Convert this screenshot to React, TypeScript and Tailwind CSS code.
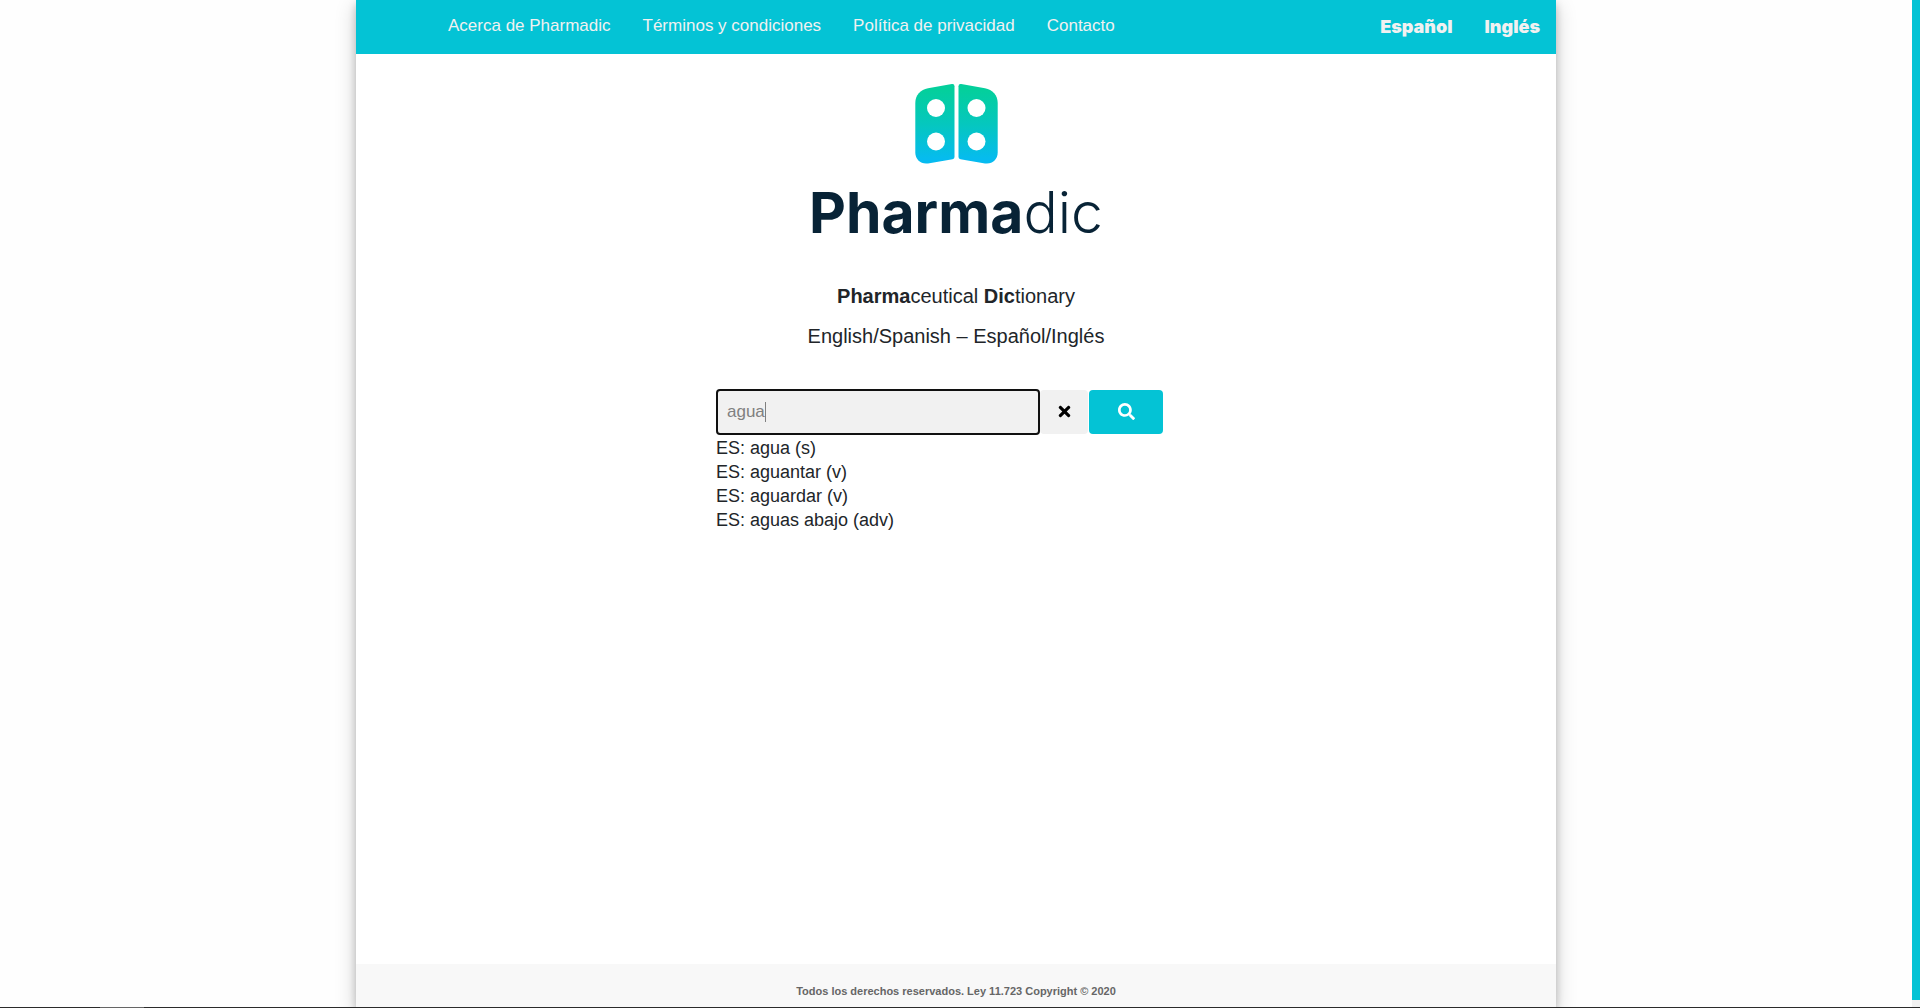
import { FaSearch, FaTimes } from 'react-icons/fa';

const navLinks = ['Acerca de Pharmadic', 'Términos y condiciones', 'Política de privacidad', 'Contacto'];
const languages = ['Español', 'Inglés'];
const suggestions = ['ES: agua (s)', 'ES: aguantar (v)', 'ES: aguardar (v)', 'ES: aguas abajo (adv)'];

function Header() {
  return (
    <header className="flex h-[54px] items-start justify-between bg-[#04c3d5] pr-4 pl-[92px] text-[#f1f1f1]">
      <nav className="flex gap-8 pt-[14px] text-[17px] leading-6">
        {navLinks.map((label) => (
          <a key={label} href="#">{label}</a>
        ))}
      </nav>
      <nav className="flex gap-8 pt-[15px] font-['Inter',sans-serif] text-[18px] leading-6 font-black">
        {languages.map((label) => (
          <a key={label} href="#">{label}</a>
        ))}
      </nav>
    </header>
  );
}

function Logo() {
  return (
    <div className="flex flex-col items-center text-[#082336]">
      <svg width="83" height="80" viewBox="0 0 83 80" aria-hidden="true">
        <defs>
          <linearGradient id="cover" x1="0" y1="0" x2="0" y2="80" gradientUnits="userSpaceOnUse">
            <stop offset="0.08" stopColor="#04cf9c" />
            <stop offset="0.5" stopColor="#05c7be" />
            <stop offset="0.95" stopColor="#06bbf0" />
          </linearGradient>
        </defs>
        <path fill="url(#cover)" d="M13 4.2 36.8 0.1Q39.5-.3 39.5 2.2V73Q39.5 74.8 37.5 75.2L13 79.4C6 80.5.3 75.5.3 68.5V19C.3 11 5.5 5.5 13 4.2Z" />
        <path fill="url(#cover)" d="M70 4.2 46.2 0.1Q43.5-.3 43.5 2.2V73Q43.5 74.8 45.5 75.2L70 79.4C77 80.5 82.7 75.5 82.7 68.5V19C82.7 11 77.5 5.5 70 4.2Z" />
        <g fill="#fff">
          <circle cx="21" cy="24" r="9" />
          <circle cx="61.5" cy="24" r="9" />
          <circle cx="21" cy="57.5" r="9" />
          <circle cx="61.5" cy="57.5" r="9" />
        </g>
      </svg>
      <h1 className="mt-[14px] font-['Inter',sans-serif] text-[57px] leading-[70px] font-light">
        <span className="font-bold">Pharma</span>dic
      </h1>
    </div>
  );
}

function Search() {
  return (
    <form className="mt-[38px] ml-[360px]" onSubmit={(e) => e.preventDefault()}>
      <div className="flex items-center">
        <div className="relative">
          <input
            type="text"
            aria-label="Buscar"
            defaultValue="agua"
            className="block h-[46px] w-[324px] rounded-[4px] border-2 border-[#101010] bg-[#f1f1f1] px-[9px] text-[17px] text-[#808080] outline-none"
          />
          <span className="absolute top-[13px] left-[49px] h-5 w-px bg-[#808080]" />
        </div>
        <button type="button" aria-label="Borrar" className="flex h-11 w-12 items-center justify-center rounded-[4px] bg-[#f1f1f1] pb-0.5 text-black">
          <FaTimes size={17} />
        </button>
        <button type="submit" aria-label="Buscar palabra" className="ml-px flex h-11 w-[74px] items-center justify-center rounded-[4px] bg-[#04c3d5] pb-0.5 text-white">
          <FaSearch size={17} />
        </button>
      </div>
      <ul className="mt-px text-[18px] leading-6">
        {suggestions.map((item) => (
          <li key={item}>{item}</li>
        ))}
      </ul>
    </form>
  );
}

export default function App() {
  return (
    <div className="flex min-h-screen flex-col font-['Liberation_Sans',Arial,sans-serif] text-[#212529]">
      <div className="flex flex-1 bg-white">
        <div className="flex flex-1 justify-center overflow-hidden bg-[#fefefe]">
          <div className="flex w-full max-w-[1200px] flex-col bg-white shadow-[0_4px_8px_rgba(0,0,0,0.2),0_6px_20px_rgba(0,0,0,0.19)]">
            <Header />
            <main className="flex-1 pt-[30px]">
              <Logo />
              <div className="mt-[33px] text-center text-[20px] leading-[30px]">
                <p><b>Pharma</b>ceutical <b>Dic</b>tionary</p>
                <p className="mt-[10px]">English/Spanish – Español/Inglés</p>
              </div>
              <Search />
            </main>
            <footer className="h-[43px] bg-[#f8f8f8] pt-[18px] text-center text-[11px] leading-[18px] font-bold text-[#666]">
              Todos los derechos reservados. Ley 11.723 Copyright © 2020
            </footer>
          </div>
        </div>
        <div className="w-2 bg-[#f1f1f1] pb-[7px]">
          <div className="h-full bg-[#04c3d5]" />
        </div>
      </div>
      <div className="h-px bg-[#2b2b2b] pl-[100px]">
        <div className="h-px w-11 bg-[#666]" />
      </div>
    </div>
  );
}
